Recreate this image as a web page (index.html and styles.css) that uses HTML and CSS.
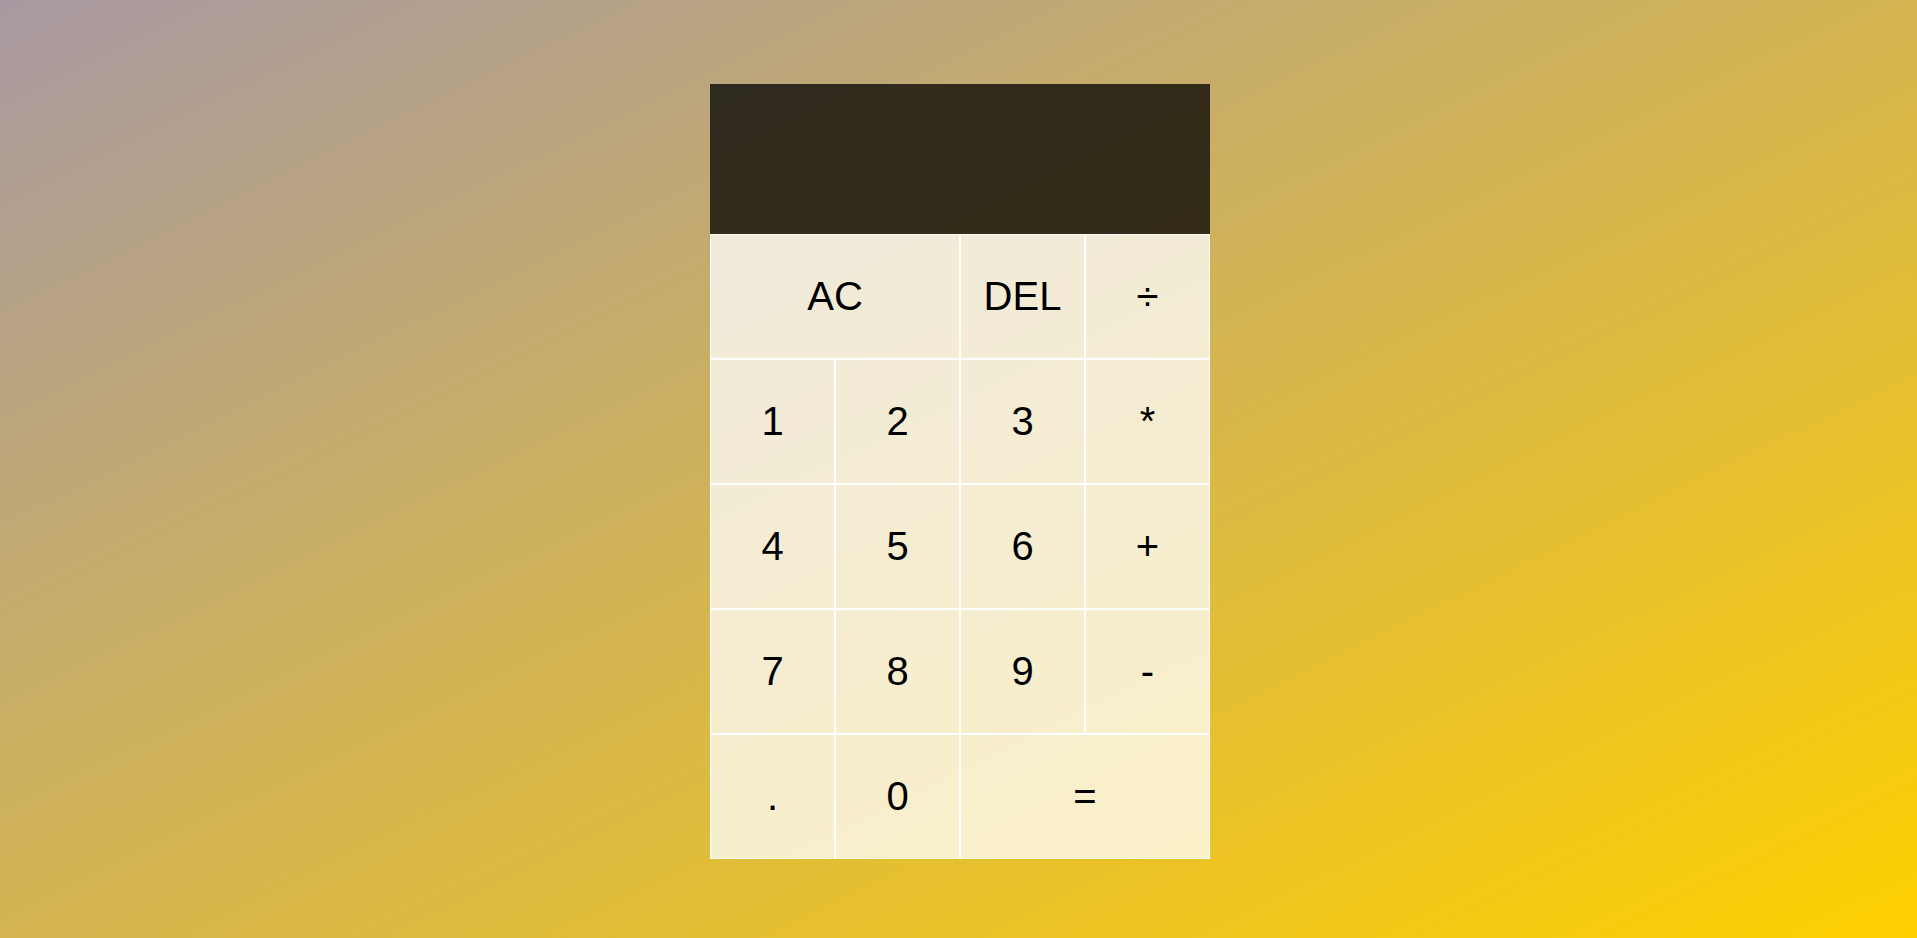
FILE: index.html
```html
<!DOCTYPE html>
<html>
<head>
<meta charset="utf-8">
<link rel="stylesheet" href="styles.css">
</head>
<body>
<div class="calculator">
  <div class="output"><div class="prev"></div><div class="curr"></div></div>
  <button class="span-two">AC</button>
  <button>DEL</button>
  <button>÷</button>
  <button>1</button>
  <button>2</button>
  <button>3</button>
  <button>*</button>
  <button>4</button>
  <button>5</button>
  <button>6</button>
  <button>+</button>
  <button>7</button>
  <button>8</button>
  <button>9</button>
  <button>-</button>
  <button>.</button>
  <button>0</button>
  <button class="span-two">=</button>
</div>
</body>
</html>
```
FILE: styles.css
```css
* { box-sizing: border-box; }
html, body {
  margin: 0;
  padding: 0;
}
body {
  min-height: 100vh;
  height: 938px;
  background: linear-gradient(to bottom right, #a899a2, #ffd000);
  font-family: "Liberation Sans", Arial, sans-serif;
  padding-top: 84px;
  padding-left: 3px;
  overflow: hidden;
}
.calculator {
  display: grid;
  justify-content: center;
  grid-template-columns: repeat(4, 125px);
  grid-template-rows: 150px repeat(5, 125px);
}
.calculator button {
  cursor: pointer;
  font-family: "Liberation Sans", Arial, sans-serif;
  font-size: 40px;
  color: #000;
  border: 1px solid #fff;
  outline: none;
  background-color: rgba(255, 255, 255, 0.75);
  padding: 0;
  margin: 0;
}
.span-two { grid-column: span 2; }
.output {
  grid-column: 1 / -1;
  background-color: rgba(0, 0, 0, 0.75);
  display: flex;
  flex-direction: column;
  align-items: flex-end;
  justify-content: space-around;
  padding: 10px;
  word-wrap: break-word;
  word-break: break-all;
}
```
